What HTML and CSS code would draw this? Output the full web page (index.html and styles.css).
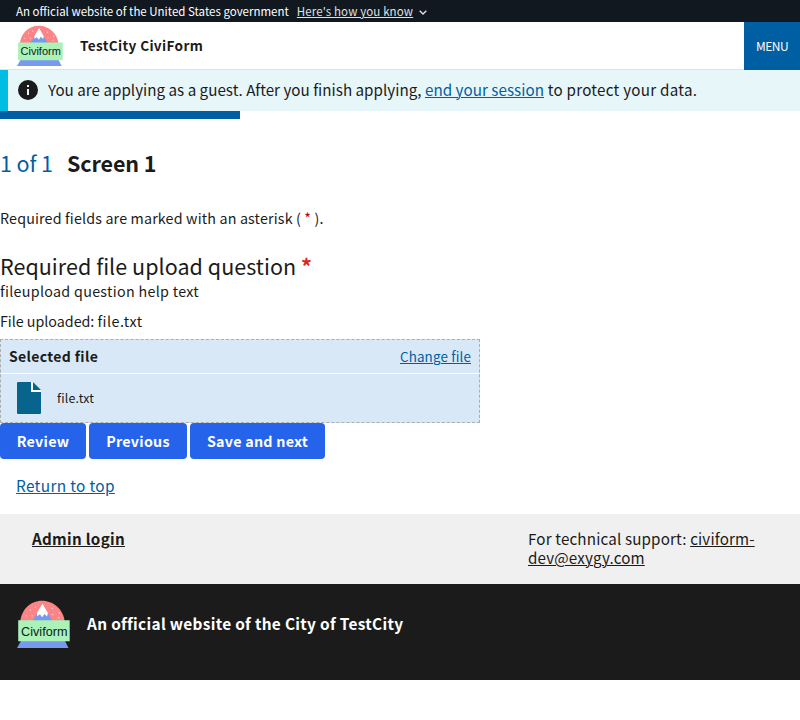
FILE: index.html
```html
<!DOCTYPE html>
<html lang="en">
<head>
<meta charset="utf-8">
<title>TestCity CiviForm</title>
<link rel="stylesheet" href="styles.css">
</head>
<body>
<svg class="defs" aria-hidden="true">
  <symbol id="logo" viewBox="0 0 52 46">
    <path fill="#fa8486" d="M3 24C3 9.500 13 .8 24.500 .8S47 9.500 47 24z"/>
    <path fill="#7799ee" d="M13 24L25 4l12 20z"/>
    <path fill="#fff" d="M25 3.500l5.300 9-.8 3.300-2.600-2.500-2.200 3.200-2.200-2.800-2.600 1.800-.4-3z"/>
    <g fill="#ffd9d8"><circle cx="18" cy="7" r=".7"/><circle cx="13" cy="9.500" r=".7"/><circle cx="9" cy="15" r=".7"/><circle cx="15" cy="15" r=".7"/><circle cx="34.500" cy="8" r=".7"/><circle cx="35" cy="14" r=".7"/><circle cx="41.500" cy="12.500" r=".7"/><circle cx="41" cy="17" r=".7"/></g>
    <path fill="#7799ee" d="M4 39h43l3.500 7H0z"/>
    <path fill="#aaf2b8" d="M1.200 19.500h50.500V39.500H1.200z"/>
    <text x="4" y="34.200" class="logo-text" textLength="45.500" lengthAdjust="spacingAndGlyphs">Civiform</text>
  </symbol>
</svg>
<div class="banner"><span class="banner-text">An official website of the United States government</span><a class="banner-link" href="#">Here's how you know</a><svg class="chevron" viewBox="0 0 8 5"><path d="M.7.7L4 4 7.300.7"/></svg></div>
<header class="header">
  <svg class="header-logo" viewBox="0 0 52 46" preserveAspectRatio="none"><use href="#logo"/></svg>
  <span class="header-title">TestCity CiviForm</span>
  <button class="menu">MENU</button>
</header>
<div class="alert">
  <svg class="info" viewBox="0 0 20 20"><circle cx="10" cy="10" r="10" fill="#1b1b1b"/><path fill="#e7f6f8" d="M9 5h2v2H9zM9 9h2v6H9z"/></svg>
  <p class="alert-text">You are applying as a guest. After you finish applying, <a href="#">end your session</a><span class="alert-end"> to protect your data.</span></p>
</div>
<div class="progress"><div class="progress-bar"></div></div>
<main>
  <h1 class="heading"><span class="step">1 of 1</span><span class="screen">Screen 1</span></h1>
  <p class="note">Required fields are marked with an asterisk ( <i>*</i> ).</p>
  <h2 class="question">Required file upload question <b>*</b></h2>
  <p class="help">fileupload question help text</p>
  <p class="uploaded">File uploaded: <span class="uploaded-name">file.txt</span></p>
  <div class="filebox">
    <div class="filebox-head"><strong>Selected file</strong><a href="#">Change file</a></div>
    <div class="filebox-row">
      <svg class="file" viewBox="0 0 24 32"><path fill="#fff" d="M14 0h2l8 8v2H14z"/><path fill="#07648d" d="M1 0h13v10h10v21q0 1-1 1H1q-1 0-1-1V1q0-1 1-1zM16 0l8 8h-8z"/></svg>
      <span class="file-name">file.txt</span>
    </div>
  </div>
  <div class="actions"><button class="b1">Review</button><button class="b2">Previous</button><button class="b3">Save and next</button></div>
</main>
<div class="top-link"><a href="#">Return to top</a></div>
<div class="support">
  <a class="admin" href="#">Admin login</a>
  <p class="tech">For technical support: <a href="#">civiform-<br>dev@exygy.com</a></p>
</div>
<footer class="footer">
  <svg class="footer-logo" viewBox="0 0 52 46" preserveAspectRatio="none"><use href="#logo"/></svg>
  <span class="footer-text">An official website of the City of TestCity</span>
</footer>
</body>
</html>
```
FILE: styles.css
```css
* { box-sizing: border-box; }
body { margin: 0; background: #fff; color: #1b1b1b; font-family: "Noto Sans CJK SC", "Noto Sans", sans-serif; font-size: 14.3px; }
h1, h2, p { margin: 0; font-weight: 400; }
a { color: #005ea2; text-decoration: underline; text-decoration-thickness: 1px; text-underline-offset: 1px; }
button { border: 0; padding: 0; font: inherit; color: #fff; }
svg { display: block; flex: none; }
.defs { display: none; }
.logo-text { font: 12px "Liberation Sans", sans-serif; fill: #10201a; }
.banner { height: 22px; padding-left: 16px; display: flex; align-items: center; background: #111820; color: #fff; font-size: 11.5px; line-height: 22px; white-space: nowrap; }
.banner-link { margin-left: 8px; color: #dfe1e2; letter-spacing: .12px; }
.chevron { width: 8px; height: 5px; margin: 2px 0 0 6px; fill: none; stroke: #dfe1e2; stroke-width: 1.4; }
.header { height: 48px; padding-left: 17px; display: flex; border-bottom: 1px solid #dfe1e2; }
.header-logo { width: 46px; height: 41px; margin-top: 3px; }
.header-title { margin-left: 17px; font-size: 13.6px; font-weight: 700; line-height: 47px; letter-spacing: .34px; }
.menu { width: 56px; height: 48px; margin-left: auto; background: #005ea2; font-size: 12px; line-height: 48px; letter-spacing: -.5px; }
.alert { height: 41px; border-left: 8px solid #00bde3; padding: 10px 0 0 10px; display: flex; align-items: flex-start; background: #e7f6f8; }
.info { width: 20px; height: 20px; }
.alert-text { margin: -2px 0 0 10px; font-size: 15.2px; letter-spacing: .014px; white-space: nowrap; line-height: 23px; }
.alert-text a { letter-spacing: .04px; }
.alert-end { letter-spacing: .25px; }
.progress { height: 8px; }
.progress-bar { width: 30%; height: 8px; background: #005ea2; }
.heading { height: 36px; margin-top: 26px; display: flex; line-height: 36px; font-size: 21.5px; letter-spacing: -.1px; white-space: nowrap; }
.step { width: 67px; color: #005ea2; }
.screen { font-weight: 700; }
.note { height: 24px; margin-top: 25px; line-height: 24px; letter-spacing: .15px; }
.note i { font-style: normal; color: #b50909; }
.question { height: 32px; margin-top: 20px; font-size: 21.5px; line-height: 32px; letter-spacing: .04px; }
.question b { color: #dc2626; }
.help, .uploaded { line-height: 24px; height: 24px; }
.help { margin-top: -3px; letter-spacing: .3px; }
.uploaded { margin-top: 6px; letter-spacing: -.03px; }
.uploaded-name { letter-spacing: .5px; }
.filebox { width: 480px; height: 84px; margin-top: 6px; border: 1px dashed #a9aeb1; background: #d9e8f6; }
.filebox-head { height: 33px; padding: 0 8px; display: flex; justify-content: space-between; font-size: 13.4px; line-height: 33px; letter-spacing: .15px; }
.filebox-head strong { font-size: 14px; letter-spacing: .35px; }
.filebox-row { height: 49px; padding-left: 16px; border-top: 1px solid #fff; display: flex; align-items: center; }
.file { width: 24px; height: 32px; }
.file-name { margin-left: 16px; font-size: 12.4px; letter-spacing: .2px; }
.actions { display: flex; gap: 3px; height: 36px; }
.actions button { height: 36px; border-radius: 4px; background: #2563eb; font-weight: 700; line-height: 36px; letter-spacing: .25px; }
.b1 { width: 86px; }
.b2 { width: 98px; }
.b3 { width: 135px; }
.top-link { height: 55px; padding: 14px 16px 0; font-size: 15.4px; line-height: 24px; letter-spacing: .32px; }
.support { height: 70px; padding: 15px 32px 0; background: #f0f0f0; display: flex; font-size: 15.2px; line-height: 19px; letter-spacing: .15px; }
.support a { color: #1b1b1b; }
.admin { width: 496px; font-weight: 700; letter-spacing: .3px; }
.footer { height: 96px; padding: 16px 17px; background: #1b1b1b; color: #fff; display: flex; }
.footer-logo { width: 53px; height: 48px; }
.footer-text { margin-left: 17px; font-size: 15.4px; font-weight: 700; line-height: 47px; letter-spacing: .31px; }
```
